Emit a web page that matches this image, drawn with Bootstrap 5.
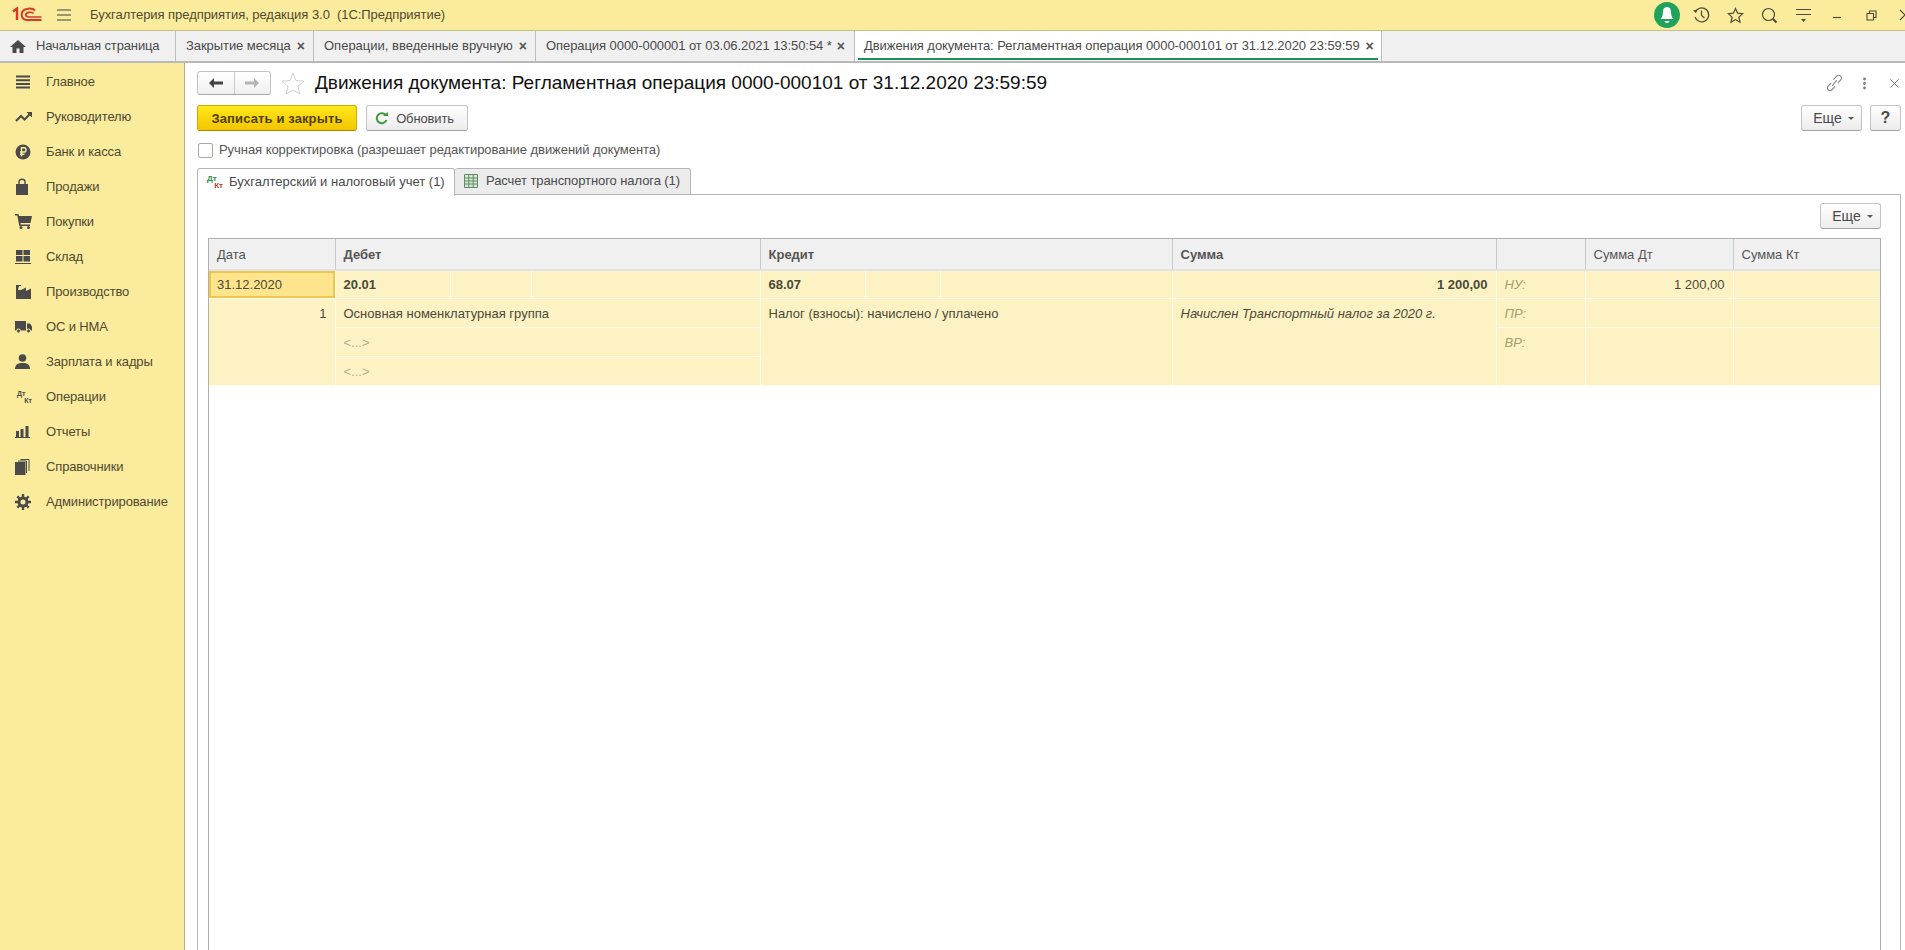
<!DOCTYPE html>
<html lang="ru"><head><meta charset="utf-8"><title>1С</title>
<link href="https://cdn.jsdelivr.net/npm/bootstrap@5.3.0/dist/css/bootstrap.min.css" rel="stylesheet">
<style>
html,body{height:950px;overflow:hidden}
body{font-family:"Liberation Sans",Arial,sans-serif;font-size:13px;color:#4a4a42;background:#fff}
svg{display:block;flex:none}
.topbar{height:31px;background:#fbeb9d;border-bottom:1px solid #c9bf8c;overflow:hidden}
.logo-box{width:55px;padding-left:12px}
.burger{width:35px;padding-left:1px}
.appname{font-size:13px;color:#4f4a30;white-space:pre;letter-spacing:-.05px}
.topicon{width:34px;display:flex;justify-content:center;align-items:center;height:30px}
.topstrip{margin-right:-17px}
.tabbar{height:32px;background:#f0f0f0;border-bottom:2px solid #b9b9b9;flex:none}
.wtab{height:30px;border-right:1px solid #bdbdbd;display:flex;align-items:center;white-space:nowrap;color:#4a4a4a;position:relative;flex:none;letter-spacing:-.07px}
.wtab .xx{font-size:14px;font-weight:700;color:#555;margin-left:6px;line-height:1}
.wtab.home{letter-spacing:-.13px}
.wtab.loose{letter-spacing:0}
.wtab.doc .xx{margin-left:5px}
.wtab.on{background:#fff}
.wtab.on::after{content:"";position:absolute;left:3px;right:3px;bottom:1px;height:2px;background:#1f8f55}
.mainrow{height:887px}
.sidebar{width:185px;background:#fbeb9d;border-right:1px solid #b5ae8a;flex:none;padding-top:1px}
.sideitem{height:35px;display:flex;align-items:center;color:#4f4a30;padding-left:15px;font-size:13px;letter-spacing:-.13px}
.sideicon{width:31px;flex:none;display:flex;align-items:center}
.dtkt{font-size:7px;font-weight:700;line-height:7px;width:15px;margin-left:2px;color:#4a4a4a;letter-spacing:0}
.dtkt b{display:block}
.dtkt b+b{text-align:right}
.content{padding:8px 4px 0 12px;min-width:0}
.headrow{height:24px}
.pagetitle{font-size:19px;color:#111;margin:0 0 0 10px;line-height:24px;font-weight:400;white-space:nowrap}
.navgroup{width:74px;height:24px;border:1px solid #c4c4c4;border-bottom-color:#a9a9a9;border-radius:3px;background:linear-gradient(#fff,#efefef)}
.navgroup span{flex:1;height:100%;display:flex;align-items:center;justify-content:center}
.navgroup span+span{border-left:1px solid #c9c9c9}
.favstar{margin-left:10px}
.headtools{margin-right:2px}
.linkic{margin-right:20px}
.dotsic{margin-right:24px}
.btnbar{height:26px;margin-top:10px}
.cbtn{height:26px;padding:0;font-size:13px;color:#4a4a4a;border:1px solid #c4c4c4;border-bottom-color:#a3a3a3;border-radius:3px;background:linear-gradient(#fff,#ececec);display:flex;align-items:center;justify-content:center;line-height:1}
.cbtn.gold{width:160px;background:linear-gradient(#ffe81a,#f4c500);border-color:#cfa900;border-bottom-color:#a98a00;font-weight:700;color:#4e4100;letter-spacing:.12px}
.cbtn.refresh{width:102px;margin-left:9px;gap:8px;letter-spacing:-.15px;padding-right:5px}
.cbtn.more{width:61px;gap:6px;font-size:14px;padding-left:4px}
.cbtn.help{width:31px;margin-left:8px;font-size:16px;font-weight:700}
.caretdn{width:0;height:0;border:3px solid transparent;border-top:3px solid #555;border-bottom:0}
.checkrow{margin-top:12px;height:15px;padding-left:1px}
.cbox{width:15px;height:15px;border:1px solid #a8a8a8;border-radius:2px;background:#fff;flex:none}
.checkrow label{margin-left:6px;color:#555;letter-spacing:-.05px;position:relative;top:-1px}
.formtabs{margin-top:10px;height:27px;flex:none}
.ftab{height:27px;border:1px solid #b5b5b5;border-radius:3px 3px 0 0;background:#ececec;display:flex;align-items:center;white-space:nowrap;color:#4a4a4a;flex:none;padding-bottom:2px}
.ftab.on{width:258px;background:#fff;border-bottom:0;padding-left:9px;gap:6px;position:relative;z-index:1;height:28px}
.ftab.off{width:236px;border-left:0;padding-left:9px;gap:8px;letter-spacing:-.08px}
.tabdt{font-size:8px;font-weight:700;line-height:7px;width:16px}
.tabdt b{display:block;color:#2d8a4a}
.tabdt b+b{color:#c0392b;text-align:right}
.panel{flex:1;border:1px solid #b5b5b5;border-bottom:0;margin-top:-1px;padding:8px 19px 0 10px;min-height:0}
.panelbar{height:26px}
.gridbox{margin-top:9px;border:1px solid #b0b0b0;border-bottom:0;flex:1;min-height:0}
.jr{table-layout:fixed;width:1671px;margin:0;border-collapse:collapse;color:#4a4a38}
.jr th,.jr td{padding:0 8px;font-size:13px;border:0;white-space:nowrap;overflow:hidden}
.jr th{height:31px;background:#f0f0f0;color:#555;font-weight:400;border-right:1px solid #c9c9c9;border-bottom:2px solid #e2e2e2;vertical-align:middle;padding-top:1px}
.jr th.strong{font-weight:700}
.jr th:last-child,.jr td:last-child{border-right:0}
.jr td{background:#fdf2c4;border-right:1px solid #fffbe8;border-bottom:1px solid #fffbe8;height:29px;line-height:27px;padding-top:1px;vertical-align:top;color:#4a4a38}
.jr tr.first td{height:28px;line-height:27px;padding-top:0}
.jr td.focus{background:#fee48c;box-shadow:inset 0 0 0 2px #ecc74f}
.jr td.bold{font-weight:700}
.jr td.dim{color:#b5ae8f}
.jr td.lab{color:#a59c70;font-style:italic}
.jr td.memo{font-style:italic}
</style></head>
<body>
<div class="topbar d-flex align-items-center">
  <div class="logo-box"><svg width="30" height="16" viewBox="0 0 30 16" fill="none" stroke="#d8382a"><path d="M1 4.500 5 1.500V13" stroke-width="2.400"/><path d="M23 3.600C20.500 .8 12 .6 10 5.500C8.800 9 10.500 13 15 13H29.500" stroke-width="2"/><path d="M21.500 6.500C19.500 4.600 14 4.800 13.800 7.800C13.800 9.500 15.500 10 17 10H29.500" stroke-width="1.700"/></svg></div>
  <div class="burger"><svg width="16" height="12" viewBox="0 0 16 12" stroke="#444"><path d="M1 1H15M1 6H15M1 11H15" stroke-width="1.100"/></svg></div>
  <div class="appname">Бухгалтерия предприятия, редакция 3.0  (1С:Предприятие)</div>
  <div class="ms-auto d-flex align-items-center topstrip">
    <div class="topicon"><svg width="26" height="26" viewBox="0 0 26 26"><circle cx="13" cy="13" r="13" fill="#1fa35c"/><path d="M13 5C10 5 9 7.500 9 10C9 13 8 15.500 6.500 17H19.500C18 15.500 17 13 17 10C17 7.500 16 5 13 5ZM10.500 19H15.500C15 20.500 14 21 13 21C12 21 11 20.500 10.500 19Z" fill="#fff"/></svg></div>
    <div class="topicon"><svg width="18" height="18" viewBox="0 0 18 18" fill="none" stroke="#4d4a3a" stroke-width="1.200"><path d="M3.300 6A7 7 0 1 1 3 11"/><path d="M1 4.500 4 7 5.500 3.500" fill="#4d4a3a" stroke="none"/><path d="M9.500 4.500V9.500L12.500 12"/></svg></div>
    <div class="topicon"><svg width="17" height="17" viewBox="0 0 17 17" fill="none" stroke="#4d4a3a" stroke-width="1.200"><path d="M8.500 1.500 10.600 6.200 15.700 6.700 11.900 10.100 13 15.200 8.500 12.600 4 15.200 5.100 10.100 1.300 6.700 6.400 6.200Z"/></svg></div>
    <div class="topicon"><svg width="17" height="17" viewBox="0 0 17 17" fill="none" stroke="#4d4a3a" stroke-width="1.200"><circle cx="7.500" cy="7.500" r="6"/><path d="M12 12 15.500 15.500" stroke-width="2"/></svg></div>
    <div class="topicon"><svg width="15" height="15" viewBox="0 0 15 15" stroke="#4d4a3a" stroke-width="1.100"><path d="M0 1.500H15M0 6.500H15"/><path d="M5 11H10L7.500 14Z" fill="#4d4a3a" stroke="none"/></svg></div>
    <div class="topicon"><svg width="10" height="10" viewBox="0 0 10 10" stroke="#4d4a3a" stroke-width="1.200"><path d="M1 7.500H9"/></svg></div>
    <div class="topicon"><svg width="11" height="11" viewBox="0 0 11 11" fill="none" stroke="#4d4a3a" stroke-width="1.100"><path d="M1 3.500H7.500V10H1ZM3.500 3.500V1H10V7.500H7.500"/></svg></div>
    <div class="topicon"><svg width="12" height="12" viewBox="0 0 12 12" stroke="#4d4a3a" stroke-width="1.100"><path d="M1 1 11 11M11 1 1 11"/></svg></div>
  </div>
</div>
<div class="tabbar d-flex">
  <div class="wtab home" style="width:176px;padding-left:10px"><svg width="16" height="13" viewBox="0 0 16 13" fill="#4a4a4a"><path d="M8 0 16 7H13.500V13H9.500V8.500H6.500V13H2.500V7H0Z"/></svg><span style="margin-left:10px">Начальная страница</span></div>
  <div class="wtab" style="width:138px;padding-left:10px">Закрытие месяца<span class="xx">×</span></div>
  <div class="wtab loose" style="width:222px;padding-left:10px">Операции, введенные вручную<span class="xx">×</span></div>
  <div class="wtab doc" style="width:319px;padding-left:10px">Операция 0000-000001 от 03.06.2021 13:50:54 *<span class="xx">×</span></div>
  <div class="wtab on" style="width:527px;padding-left:9px">Движения документа: Регламентная операция 0000-000101 от 31.12.2020 23:59:59<span class="xx">×</span></div>
</div>
<div class="mainrow d-flex">
  <nav class="sidebar">
    <div class="sideitem"><span class="sideicon"><svg width="16" height="14" viewBox="0 0 16 14" stroke="#4a4a4a" stroke-width="2"><path d="M1 1.500H15M1 5.200H15M1 8.900H15M1 12.600H15"/></svg></span>Главное</div>
    <div class="sideitem"><span class="sideicon"><svg width="18" height="12" viewBox="0 0 18 12" fill="none" stroke="#4a4a4a" stroke-width="2"><path d="M1 10 6 5 9.500 8.500 15 3"/><path d="M11.500 1H17V6.500" fill="#4a4a4a" stroke="none"/></svg></span>Руководителю</div>
    <div class="sideitem"><span class="sideicon"><svg width="16" height="16" viewBox="0 0 16 16"><circle cx="8" cy="8" r="7.500" fill="#4a4a4a"/><path d="M6.500 12.500V3.800H9.300C11.500 3.800 11.500 8 9.300 8H5M5 10.200H9.500" fill="none" stroke="#fbeb9d" stroke-width="1.400"/></svg></span>Банк и касса</div>
    <div class="sideitem"><span class="sideicon"><svg width="14" height="17" viewBox="0 0 14 17"><path d="M1 6H13V17H1Z" fill="#4a4a4a"/><path d="M4 8V3.500C4 .5 10 .5 10 3.500V8" fill="none" stroke="#4a4a4a" stroke-width="1.400"/></svg></span>Продажи</div>
    <div class="sideitem"><span class="sideicon"><svg width="17" height="15" viewBox="0 0 17 15" fill="#4a4a4a"><path d="M0 0H3.500L4 2H17L15.500 9H5.500L5.700 10.500H15V12H4.300L2.300 1.500H0Z"/><circle cx="6" cy="13.500" r="1.500"/><circle cx="13.500" cy="13.500" r="1.500"/></svg></span>Покупки</div>
    <div class="sideitem"><span class="sideicon"><svg width="16" height="14" viewBox="0 0 16 14" fill="#4a4a4a"><path d="M1 0H7.500V5H1ZM8.500 0H15V5H8.500ZM1 6H7.500V11.500H1ZM8.500 6H15V11.500H8.500ZM0 13H16V14H0Z"/></svg></span>Склад</div>
    <div class="sideitem"><span class="sideicon"><svg width="16" height="14" viewBox="0 0 16 14" fill="#4a4a4a"><path d="M1 0H6V5L11 2.500V6L16 3.500V14H1Z"/><path d="M4 1 7 1 6 5H3Z" fill="#fbeb9d"/></svg></span>Производство</div>
    <div class="sideitem"><span class="sideicon"><svg width="17" height="12" viewBox="0 0 17 12" fill="#4a4a4a"><path d="M0 0H11V9.500H0ZM12 2.500H15L17 5.500V9.500H12Z"/><circle cx="3.500" cy="10" r="2" stroke="#fbeb9d"/><circle cx="13.500" cy="10" r="2" stroke="#fbeb9d"/></svg></span>ОС и НМА</div>
    <div class="sideitem"><span class="sideicon"><svg width="15" height="15" viewBox="0 0 15 15" fill="#4a4a4a"><circle cx="7.500" cy="4" r="3.800"/><path d="M0 15C0 10.500 3 9 7.500 9C12 9 15 10.500 15 15Z"/></svg></span>Зарплата и кадры</div>
    <div class="sideitem"><span class="sideicon"><span class="dtkt"><b>Дт</b><b>Кт</b></span></span>Операции</div>
    <div class="sideitem"><span class="sideicon"><svg width="15" height="12" viewBox="0 0 15 12" fill="#4a4a4a"><path d="M1 5H4V11H1ZM5.500 3H8.500V11H5.500ZM10.500 0H13.500V11H10.500ZM0 11H15V12H0Z"/></svg></span>Отчеты</div>
    <div class="sideitem"><span class="sideicon"><svg width="15" height="16" viewBox="0 0 15 16" fill="#4a4a4a"><path d="M0 3H10.500V16H0Z"/><path d="M11.500 14V2H3M14 12V.5H5.500" fill="none" stroke="#4a4a4a" stroke-width="1"/></svg></span>Справочники</div>
    <div class="sideitem"><span class="sideicon"><svg width="16" height="16" viewBox="0 0 16 16" fill="none" stroke="#4a4a4a"><circle cx="8" cy="8" r="4" stroke-width="3"/><path d="M8 0V3M8 13V16M0 8H3M13 8H16M2.300 2.300 4.500 4.500M11.500 11.500 13.700 13.700M13.700 2.300 11.500 4.500M4.500 11.500 2.300 13.700" stroke-width="2.400"/></svg></span>Администрирование</div>
  </nav>
  <main class="content flex-grow-1 d-flex flex-column">
    <div class="headrow d-flex align-items-center">
      <div class="navgroup d-flex">
        <span><svg width="14" height="10" viewBox="0 0 14 10"><path d="M0 5 5 0V3.500H14V6.500H5V10Z" fill="#444"/></svg></span>
        <span><svg width="14" height="10" viewBox="0 0 14 10"><path d="M14 5 9 0V3.500H0V6.500H9V10Z" fill="#b4b4b4"/></svg></span>
      </div>
      <svg class="favstar" width="24" height="23" viewBox="0 0 24 23" fill="none" stroke="#cfcfcf"><path d="M12 1 15 8.500 23 9.200 17 14.300 18.900 22 12 17.900 5.100 22 7 14.300 1 9.200 9 8.500Z"/></svg>
      <h1 class="pagetitle">Движения документа: Регламентная операция 0000-000101 от 31.12.2020 23:59:59</h1>
      <div class="ms-auto d-flex align-items-center headtools">
        <svg class="linkic" width="17" height="18" viewBox="0 0 15 16" fill="none" stroke="#8a8a8a" stroke-width="1"><path d="M6.500 5 9.500 1.800C12 -.2 15 3 13.200 5L10.500 8M8 11 5.200 14C3 16 0 13 1.800 10.800L4.500 8M5.500 10.500 9.500 5.500"/></svg>
        <svg class="dotsic" width="3" height="13" viewBox="0 0 3 13" fill="#808080"><circle cx="1.500" cy="2" r="1.400"/><circle cx="1.500" cy="6.500" r="1.400"/><circle cx="1.500" cy="11" r="1.400"/></svg>
        <svg width="9" height="9" viewBox="0 0 9 9" stroke="#777"><path d="M.5 .5 8.500 8.500M8.500 .5 .5 8.500"/></svg>
      </div>
    </div>
    <div class="btnbar d-flex">
      <button class="btn cbtn gold">Записать и закрыть</button>
      <button class="btn cbtn refresh"><svg width="13" height="13" viewBox="0 0 13 13" fill="none"><path d="M11 3.500A5 5 0 1 0 11.500 8" stroke="#3c9a3c" stroke-width="2"/><path d="M8 4H13V0Z" fill="#3c9a3c"/></svg>Обновить</button>
      <button class="btn cbtn more ms-auto">Еще<span class="caretdn"></span></button>
      <button class="btn cbtn help">?</button>
    </div>
    <div class="checkrow d-flex align-items-center"><span class="cbox"></span><label>Ручная корректировка (разрешает редактирование движений документа)</label></div>
    <div class="formtabs d-flex">
      <div class="ftab on"><span class="tabdt"><b>Дт</b><b>Кт</b></span>Бухгалтерский и налоговый учет (1)</div>
      <div class="ftab off"><svg width="14" height="14" viewBox="0 0 14 14" fill="#dbe8d4" stroke="#5d8a6a"><path d="M.5 .5H13.500V13.500H.5ZM.5 4H13.500M.5 7H13.500M.5 10H13.500M4.800 .5V13.500M9.200 .5V13.500"/></svg>Расчет транспортного налога (1)</div>
    </div>
    <div class="panel d-flex flex-column">
      <div class="panelbar d-flex"><button class="btn cbtn more ms-auto">Еще<span class="caretdn"></span></button></div>
      <div class="gridbox overflow-hidden">
        <table class="jr">
          <colgroup><col style="width:126px"><col style="width:115px"><col style="width:81px"><col style="width:229px"><col style="width:105px"><col style="width:75px"><col style="width:232px"><col style="width:324px"><col style="width:89px"><col style="width:148px"><col style="width:147px"></colgroup>
          <thead><tr><th>Дата</th><th colspan="3" class="strong">Дебет</th><th colspan="3" class="strong">Кредит</th><th class="strong">Сумма</th><th></th><th>Сумма Дт</th><th>Сумма Кт</th></tr></thead>
          <tbody>
            <tr class="first"><td class="focus">31.12.2020</td><td class="bold">20.01</td><td></td><td></td><td class="bold">68.07</td><td></td><td></td><td class="bold text-end">1 200,00</td><td class="lab">НУ:</td><td class="text-end">1 200,00</td><td></td></tr>
            <tr><td rowspan="3" class="text-end">1</td><td colspan="3">Основная номенклатурная группа</td><td colspan="3" rowspan="3">Налог (взносы): начислено / уплачено</td><td rowspan="3" class="memo">Начислен Транспортный налог за 2020 г.</td><td class="lab">ПР:</td><td></td><td></td></tr>
            <tr><td colspan="3" class="dim">&lt;...&gt;</td><td rowspan="2" class="lab">ВР:</td><td rowspan="2"></td><td rowspan="2"></td></tr>
            <tr><td colspan="3" class="dim">&lt;...&gt;</td></tr>
          </tbody>
        </table>
      </div>
    </div>
  </main>
</div>
</body></html>
